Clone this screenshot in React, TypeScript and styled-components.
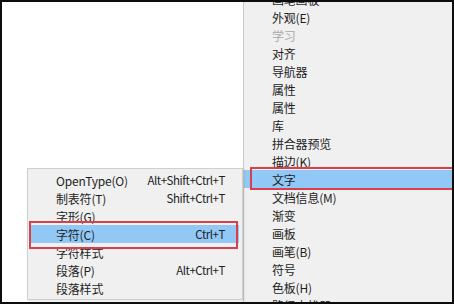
import React from 'react'
import styled, { createGlobalStyle } from 'styled-components'

const Global = createGlobalStyle`
  html, body { margin: 0; padding: 0; background: #0d0d0d; }
  body { font-family: "Noto Sans CJK SC", sans-serif; }
`

const Frame = styled.div`
  position: relative;
  width: 450px;
  height: 300px;
  margin: 2px;
  background: #ffffff;
  overflow: hidden;
  display: flex;
  justify-content: flex-end;
  align-items: flex-start;
`

const Menu = styled.div`
  background: #f0f0f0;
  font-size: 12px;
  color: #1e1e1e;
`

const MainMenu = styled(Menu)`
  width: 208px;
  margin-top: -12px;
  border-left: 1px solid #c9c9c9;
  height: 330px;
`

const SubMenu = styled(Menu)`
  position: absolute;
  left: 25px;
  top: 166px;
  width: 216px;
  height: 132px;
  border: 1px solid #cfcfcf;
  padding: 2px 0;
  box-sizing: border-box;
  box-shadow: 1px 1px 2px rgba(0, 0, 0, 0.12);
`

const Item = styled.div<{ $active?: boolean; $disabled?: boolean; $inset?: number }>`
  height: 18px;
  display: flex;
  align-items: center;
  justify-content: space-between;
  margin: 0 ${p => p.$inset ?? 0}px;
  padding: 0 ${p => 17 - (p.$inset ?? 0)}px 0 ${p => 28 - (p.$inset ?? 0)}px;
  background: ${p => (p.$active ? '#92c8f6' : 'transparent')};
  color: ${p => (p.$disabled ? '#a8a8a8' : '#1e1e1e')};
  white-space: nowrap;
`

const Label = styled.span`
  letter-spacing: -0.2px;
`

const Shortcut = styled.span`
  color: #1e1e1e;
  font-size: 11.5px;
  letter-spacing: -0.45px;
`

const Annotation = styled.div<{ $x: number; $y: number; $w: number; $h: number }>`
  position: absolute;
  left: ${p => p.$x}px;
  top: ${p => p.$y}px;
  width: ${p => p.$w}px;
  height: ${p => p.$h}px;
  border: 2px solid #d8414b;
  box-sizing: border-box;
  pointer-events: none;
`

const mainItems: { label: string; disabled?: boolean; active?: boolean }[] = [
  { label: '画笔画板' },
  { label: '外观(E)' },
  { label: '学习', disabled: true },
  { label: '对齐' },
  { label: '导航器' },
  { label: '属性' },
  { label: '属性' },
  { label: '库' },
  { label: '拼合器预览' },
  { label: '描边(K)' },
  { label: '文字', active: true },
  { label: '文档信息(M)' },
  { label: '渐变' },
  { label: '画板' },
  { label: '画笔(B)' },
  { label: '符号' },
  { label: '色板(H)' },
  { label: '路径查找器' },
]

const subItems: { label: string; key?: string; active?: boolean }[] = [
  { label: 'OpenType(O)', key: 'Alt+Shift+Ctrl+T' },
  { label: '制表符(T)', key: 'Shift+Ctrl+T' },
  { label: '字形(G)' },
  { label: '字符(C)', key: 'Ctrl+T', active: true },
  { label: '字符样式' },
  { label: '段落(P)', key: 'Alt+Ctrl+T' },
  { label: '段落样式' },
]

export default function App() {
  return (
    <>
      <Global />
      <Frame>
        <MainMenu>
          {mainItems.map((it, i) => (
            <Item key={i} $active={it.active} $disabled={it.disabled}>
              <Label>{it.label}</Label>
            </Item>
          ))}
        </MainMenu>
        <SubMenu>
          {subItems.map((it, i) => (
            <Item key={i} $active={it.active} $inset={3}>
              <Label>{it.label}</Label>
              {it.key && <Shortcut>{it.key}</Shortcut>}
            </Item>
          ))}
        </SubMenu>
        <Annotation $x={27} $y={219} $w={209} $h={28} />
        <Annotation $x={248} $y={165} $w={212} $h={23} />
      </Frame>
    </>
  )
}
